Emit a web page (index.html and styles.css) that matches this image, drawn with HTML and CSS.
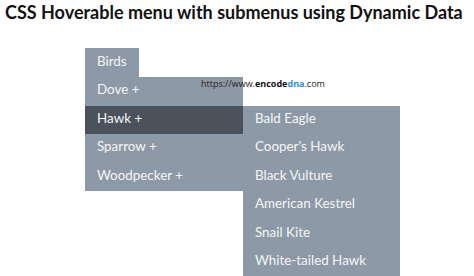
FILE: index.html
```html
<!DOCTYPE html>
<html lang="en">
<head>
    <meta charset="UTF-8">
    <title>CSS Hoverable menu with submenus</title>
    <link rel="stylesheet" href="styles.css">
</head>
<body>
    <h2 class="page-title">CSS Hoverable menu with submenus using Dynamic Data</h2>

    <div class="menu-wrap">
        <div class="menu-head">Birds</div>
        <ul class="menu">
            <li>Dove +</li>
            <li class="active">Hawk +
                <ul class="submenu">
                    <li>Bald Eagle</li>
                    <li>Cooper's Hawk</li>
                    <li>Black Vulture</li>
                    <li>American Kestrel</li>
                    <li>Snail Kite</li>
                    <li>White-tailed Hawk</li>
                </ul>
            </li>
            <li>Sparrow +</li>
            <li>Woodpecker +</li>
        </ul>
        <div class="watermark">https://www.<b>encode</b><span>dna</span>.com</div>
    </div>
</body>
</html>
```

FILE: styles.css
```css
html, body {
    min-height: 276px;
}
body {
    margin: 0;
    font-family: Lato, "Open Sans", sans-serif;
    background-color: #fff;
}
.page-title {
    margin: 0;
    padding: 1px 0 0 5px;
    font-size: 18px;
    font-weight: bold;
    color: #111;
    line-height: 22px;
}
.menu-wrap {
    position: relative;
    margin: 25px 0 0 85px;
    width: 158px;
}
.menu-head {
    width: 54px;
    height: 29px;
    line-height: 26px;
    padding-left: 12px;
    box-sizing: border-box;
    background-color: #8d99a6;
    color: #f4f6f8;
    font-size: 13.4px;
}
ul {
    list-style-type: none;
    margin: 0;
    padding: 0;
}
.menu {
    background-color: #8d99a6;
}
.menu li {
    position: relative;
    height: 28.5px;
    line-height: 25px;
    padding-left: 12px;
    color: #f4f6f8;
    font-size: 13.4px;
}
.menu li.active {
    background-color: #4b525c;
}
.submenu {
    position: absolute;
    left: 158px;
    top: 0;
    width: 157px;
    background-color: #8d99a6;
}
.submenu li {
    background-color: #8d99a6;
}
.watermark {
    position: absolute;
    left: 116px;
    top: 29px;
    font-family: "Open Sans", sans-serif;
    font-size: 9px;
    color: #222;
    white-space: nowrap;
}
.watermark b {
    color: #111;
}
.watermark span {
    color: #2b8fd8;
    font-weight: bold;
}
```
